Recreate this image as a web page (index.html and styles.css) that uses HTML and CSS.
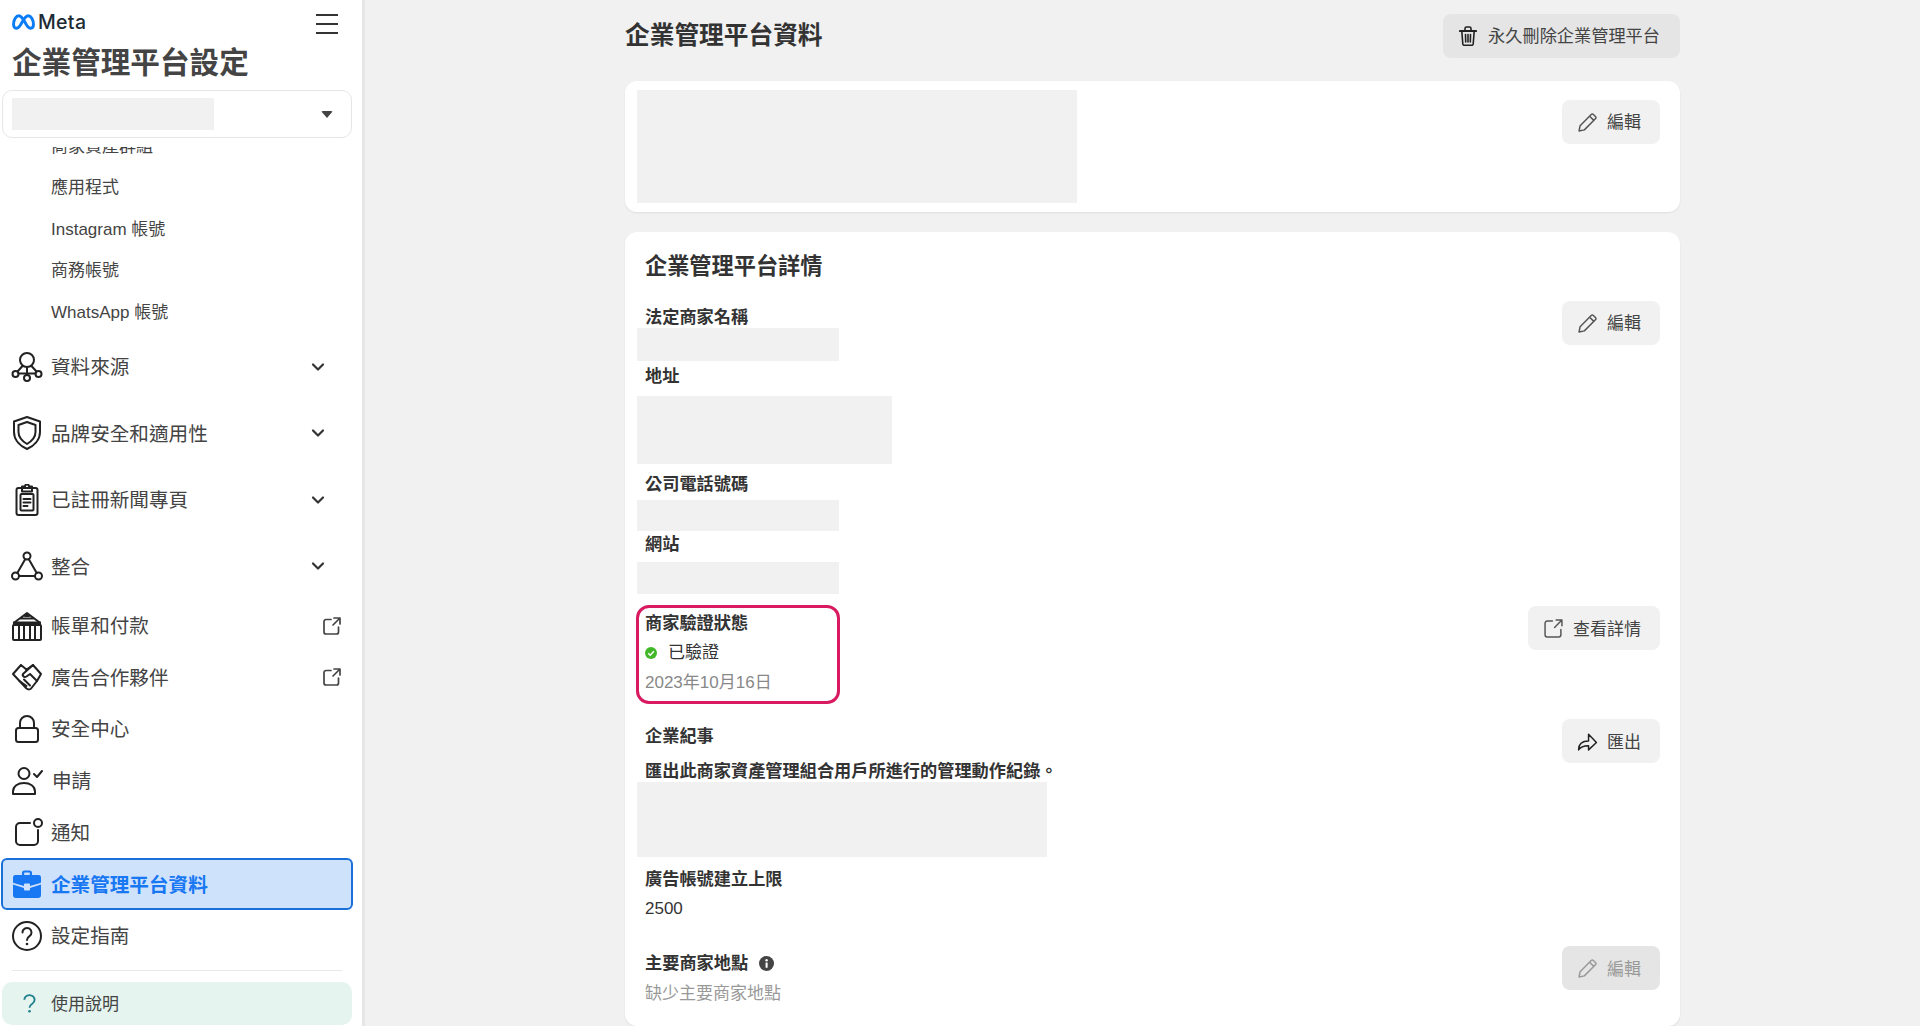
FILE: index.html
```html
<!DOCTYPE html>
<html lang="zh-Hant">
<head>
<meta charset="utf-8">
<title>企業管理平台設定</title>
<link rel="stylesheet" href="styles.css">
</head>
<body>
<div class="app">
  <aside class="sidebar">
    <header class="side-head">
      <div class="brand-row">
        <div class="brand">
          <svg class="meta-mark" viewBox="0 0 22 15"><path d="M1.500 10C1.500 5 4 1.500 6.500 1.500C9.500 1.500 12 7 14 10.500C15.500 13 17 13.500 18 13.500C19.500 13.500 20.500 12 20.500 10C20.500 5 18 1.500 15.500 1.500C12.500 1.500 10 7 8 10.500C6.500 13 5 13.500 4 13.500C2.500 13.500 1.500 12 1.500 10Z"/></svg>
          <span class="brand-name">Meta</span>
        </div>
        <div class="burger"><i></i><i></i><i></i></div>
      </div>
      <h1 class="side-title">企業管理平台設定</h1>
      <div class="picker">
        <div class="picker-mask"></div>
        <span class="caret"></span>
      </div>
    </header>

    <nav class="nav">
      <div class="nav-inner">
        <a class="sub">商家資產群組</a>
        <a class="sub">應用程式</a>
        <a class="sub">Instagram 帳號</a>
        <a class="sub">商務帳號</a>
        <a class="sub">WhatsApp 帳號</a>

        <a class="row group">
          <svg class="ico" viewBox="0 0 32 32"><circle cx="16" cy="9" r="7"/><circle cx="4.500" cy="23" r="3"/><circle cx="16" cy="27" r="3"/><circle cx="27.500" cy="23" r="3"/><path d="M7.500 22.500h17M16 16v8M11.500 15l-5 5.500M20.500 15l5 5.500"/></svg>
          <span class="row-text">資料來源</span>
          <svg class="chev" viewBox="0 0 14 14"><path d="M2 4.500l5 5 5-5"/></svg>
        </a>
        <a class="row group">
          <svg class="ico ico-tall" viewBox="0 0 32 36"><path d="M16 2L29 6.500V17C29 25 23 31 16 34C9 31 3 25 3 17V6.500Z"/><path d="M16 7l8.500 3V17C24.500 22 21 26 16 29C11 26 7.500 22 7.500 17V10Z"/></svg>
          <span class="row-text">品牌安全和適用性</span>
          <svg class="chev" viewBox="0 0 14 14"><path d="M2 4.500l5 5 5-5"/></svg>
        </a>
        <a class="row group">
          <svg class="ico" viewBox="0 0 32 32"><rect x="5.500" y="4" width="21" height="27" rx="2"/><path d="M11 4V2.500h3a2 2 0 0 1 4 0h3V4M11 4v3.500h10V4"/><rect x="9.500" y="10" width="13" height="16.500" rx="1"/><path d="M12.500 15h7M12.500 18.500h7M12.500 22h4"/></svg>
          <span class="row-text">已註冊新聞專頁</span>
          <svg class="chev" viewBox="0 0 14 14"><path d="M2 4.500l5 5 5-5"/></svg>
        </a>
        <a class="row group">
          <svg class="ico" viewBox="0 0 32 32"><circle cx="16" cy="6" r="3.500"/><circle cx="4.500" cy="26" r="3.500"/><circle cx="27.500" cy="26" r="3.500"/><path d="M14.300 9L6.300 23M17.700 9l8 14M8 26h16"/></svg>
          <span class="row-text">整合</span>
          <svg class="chev" viewBox="0 0 14 14"><path d="M2 4.500l5 5 5-5"/></svg>
        </a>

        <a class="row">
          <svg class="ico" viewBox="0 0 32 32"><path d="M4 12L16 3l12 9M10 8.500h12M14 6h4"/><rect class="dot" x="2" y="11.500" width="28" height="4"/><rect x="2" y="15" width="28" height="15" rx="1"/><path d="M8 16v13M13 16v13M19 16v13M24 16v13"/></svg>
          <span class="row-text">帳單和付款</span>
          <svg class="ext" viewBox="0 0 18 18"><path d="M8 2.500H3A2 2 0 0 0 1 4.500V15a2 2 0 0 0 2 2h10.500a2 2 0 0 0 2-2V10M10 8l6.500-6.500M11 1h6v6"/></svg>
        </a>
        <a class="row">
          <svg class="ico" viewBox="0 0 32 32"><path d="M10 4L2 13l6.500 7 7 7.500c2 1.500 4 1 5-.5L26 20l4-7-8-9-7 5M10 4l6 5"/><path d="M22 4L12.500 12.500c-2 2 .5 4.500 3 3L19 13l7 7M8.500 20l7 5M13 18.500l6 6"/></svg>
          <span class="row-text">廣告合作夥伴</span>
          <svg class="ext" viewBox="0 0 18 18"><path d="M8 2.500H3A2 2 0 0 0 1 4.500V15a2 2 0 0 0 2 2h10.500a2 2 0 0 0 2-2V10M10 8l6.500-6.500M11 1h6v6"/></svg>
        </a>
        <a class="row">
          <svg class="ico" viewBox="0 0 32 32"><rect x="5" y="15" width="22" height="14" rx="2.500"/><path d="M9 15V10a7 7 0 0 1 14 0v5"/></svg>
          <span class="row-text">安全中心</span>
        </a>
        <a class="row">
          <svg class="ico" viewBox="0 0 32 32"><circle cx="13" cy="8.500" r="5.500"/><path d="M2 29v-2.500C2 21 7 18 13 18s11 3 11 8.500V29Z"/><path d="M23 9l3 3 5-6"/></svg>
          <span class="row-text row-text-nudge">申請</span>
        </a>
        <a class="row">
          <svg class="ico" viewBox="0 0 32 32"><path d="M19 7H9a4 4 0 0 0-4 4v14a4 4 0 0 0 4 4h14a4 4 0 0 0 4-4V14"/><circle cx="27" cy="7" r="4"/></svg>
          <span class="row-text">通知</span>
        </a>
        <a class="row active">
          <svg class="ico solid" viewBox="0 0 32 32"><path d="M11 7V5a2.500 2.500 0 0 1 2.500-2.500h5A2.500 2.500 0 0 1 21 5v2h-2.200V5a.500.500 0 0 0-.500-.500h-4.600a.500.500 0 0 0-.500.500v2z"/><path d="M4 7h24a2.500 2.500 0 0 1 2 2.500V14a1 1 0 0 1-.6.900L19 18v-1.500a1 1 0 0 0-1-1h-4a1 1 0 0 0-1 1V18L2.600 14.900A1 1 0 0 1 2 14V9.500A2.500 2.500 0 0 1 4 7z"/><path d="M2 16.500L13 20v1.500a1 1 0 0 0 1 1h4a1 1 0 0 0 1-1V20l11-3.500V27a3 3 0 0 1-3 3H5a3 3 0 0 1-3-3z"/><rect x="14.700" y="17" width="2.600" height="4" rx=".5"/></svg>
          <span class="row-text">企業管理平台資料</span>
        </a>
        <a class="row">
          <svg class="ico" viewBox="0 0 32 32"><circle cx="16" cy="16" r="14"/><path d="M11.500 12.500a4.500 4.500 0 1 1 7 3.700c-1.500 1-2.500 1.800-2.500 3.800"/><circle class="dot" cx="16" cy="24" r="1.300"/></svg>
          <span class="row-text">設定指南</span>
        </a>
      </div>
    </nav>

    <footer class="side-foot">
      <div class="rule"></div>
      <a class="help">
        <svg class="help-ico" viewBox="0 0 14 20"><path d="M1.500 6a5.500 5 0 1 1 8.500 4.200C8 11.500 7 12.500 7 14.500"/><circle cx="7" cy="18.300" r="1.400"/></svg>
        <span class="help-text">使用說明</span>
      </a>
    </footer>
  </aside>

  <main class="main">
    <div class="page-head">
      <h2 class="page-title">企業管理平台資料</h2>
      <button class="btn btn-strong btn-del">
        <svg class="btn-ico trash" viewBox="0 0 18 20"><path class="lid" d="M1 5h16"/><path d="M6 4.500V2.500A1.500 1.500 0 0 1 7.500 1h3A1.500 1.500 0 0 1 12 2.500v2M2.800 5l1 13a1.500 1.500 0 0 0 1.500 1.300h7.400a1.500 1.500 0 0 0 1.500-1.300l1-13M6.500 8.500l.2 7.500M9 8.500V16M11.500 8.500l-.2 7.500"/></svg>
        <span class="btn-text">永久刪除企業管理平台</span>
      </button>
    </div>

    <section class="card card-top">
      <div class="mask mask-logo"></div>
      <button class="btn btn-edit-top">
        <svg class="btn-ico thin" viewBox="0 0 18 18"><path d="M1 17l1-5L12.500 1.500a1.500 1.500 0 0 1 2.100 0l1.900 1.900a1.500 1.500 0 0 1 0 2.100L6 16zM11 3l4 4"/></svg>
        <span class="btn-text">編輯</span>
      </button>
    </section>

    <section class="card card-detail">
      <h3 class="card-title">企業管理平台詳情</h3>

      <div class="split">
        <div class="col">
          <div class="label l-legal">法定商家名稱</div>
          <div class="mask mask-name"></div>
          <div class="label l-addr">地址</div>
          <div class="mask mask-addr"></div>
          <div class="label l-phone">公司電話號碼</div>
          <div class="mask mask-phone"></div>
          <div class="label l-site">網站</div>
          <div class="mask mask-site"></div>
        </div>
        <button class="btn btn-a">
          <svg class="btn-ico thin" viewBox="0 0 18 18"><path d="M1 17l1-5L12.500 1.500a1.500 1.500 0 0 1 2.100 0l1.900 1.900a1.500 1.500 0 0 1 0 2.100L6 16zM11 3l4 4"/></svg>
          <span class="btn-text">編輯</span>
        </button>
      </div>

      <div class="split">
        <div class="col">
          <div class="verify">
            <div class="label">商家驗證狀態</div>
            <div class="status">
              <svg class="check" viewBox="0 0 12 12"><circle cx="6" cy="6" r="6"/><path d="M3.200 6.200l2 2 3.700-4"/></svg>
              <span>已驗證</span>
            </div>
            <div class="muted date">2023年10月16日</div>
          </div>
        </div>
        <button class="btn btn-b">
          <svg class="btn-ico thin" viewBox="0 0 18 18"><path d="M8 2H3A2 2 0 0 0 1 4v11a2 2 0 0 0 2 2h11a2 2 0 0 0 2-2v-5M10 8l6.500-6.500M11.500 1H17v5.500"/></svg>
          <span class="btn-text btn-text-low">查看詳情</span>
        </button>
      </div>

      <div class="split">
        <div class="col">
          <div class="label l-log">企業紀事</div>
          <div class="label l-logdesc">匯出此商家資產管理組合用戶所進行的管理動作紀錄。</div>
          <div class="mask mask-log"></div>
          <div class="label l-limit">廣告帳號建立上限</div>
          <div class="value">2500</div>
        </div>
        <button class="btn btn-c">
          <svg class="btn-ico dark" viewBox="0 0 20 20"><path d="M1.500 18C1.500 12 5 9.500 11 9.500V3l7.500 8L11 18v-4C7 14 3.500 14.500 1.500 18Z"/></svg>
          <span class="btn-text btn-text-low">匯出</span>
        </button>
      </div>

      <div class="split split-end">
        <div class="col">
          <div class="label l-place">主要商家地點
            <svg class="info" viewBox="0 0 16 16"><circle cx="8" cy="8" r="8"/><rect class="info-i" x="7" y="7" width="2.200" height="5.500"/><circle class="info-i" cx="8.100" cy="4.600" r="1.300"/></svg>
          </div>
          <div class="muted value-place">缺少主要商家地點</div>
        </div>
        <button class="btn btn-d btn-strong is-off">
          <svg class="btn-ico thin" viewBox="0 0 18 18"><path d="M1 17l1-5L12.500 1.500a1.500 1.500 0 0 1 2.100 0l1.900 1.900a1.500 1.500 0 0 1 0 2.100L6 16zM11 3l4 4"/></svg>
          <span class="btn-text btn-text-low">編輯</span>
        </button>
      </div>
    </section>
  </main>
</div>
</body>
</html>
```

FILE: styles.css
```css
* { box-sizing: border-box; }
html, body { margin: 0; height: 100%; overflow: hidden; }
body {
  font-family: "Liberation Sans", "Noto Sans CJK TC", sans-serif;
  font-size: 17px;
  color: #444;
  background: #f1f1f1;
}
.app { display: flex; height: 1026px; overflow: hidden; }

/* sidebar */
.sidebar {
  width: 365px;
  flex: none;
  display: flex;
  flex-direction: column;
  background: #fff;
  border-right: 3px solid #e6e6e6;
}
.side-head { height: 147px; flex: none; padding: 0 2px; }
.brand-row {
  display: flex;
  justify-content: space-between;
  align-items: flex-start;
  padding: 13px 22px 0 10px;
  height: 44px;
}
.brand { display: flex; align-items: center; height: 18px; }
.meta-mark { width: 23px; height: 16px; fill: none; stroke: #0a7cf5; stroke-width: 2.800; }
.brand-name { font-family: Inter, sans-serif; font-size: 19.500px; font-weight: 500; letter-spacing: .3px; color: #1c2b33; margin-left: 3px; }
.burger { display: flex; flex-direction: column; gap: 7px; padding-top: 1px; }
.burger i { display: block; width: 22px; height: 2px; background: #333; }
.side-title { margin: 0; padding-left: 10px; font-size: 29.600px; line-height: 38px; font-weight: 700; color: #444; height: 46px; }
.picker {
  height: 48px;
  width: 350px;
  border: 1px solid #e6e6e6;
  border-radius: 10px;
  display: flex;
  align-items: center;
  justify-content: space-between;
  padding: 0 18px 0 9px;
}
.picker-mask { width: 202px; height: 32px; background: #f1f1f1; }
.caret { width: 0; height: 0; border-left: 6px solid transparent; border-right: 6px solid transparent; border-top: 7px solid #444; border-radius: 2px; }

.nav { flex: 1; overflow: hidden; min-height: 0; }
.nav-inner { margin-top: -21.300px; }
.sub { display: block; height: 41.600px; line-height: 41.600px; padding-left: 51px; font-size: 17px; color: #444; }
.row {
  display: flex;
  align-items: center;
  height: 51.700px;
  padding: 0 21px 0 11px;
  font-size: 19.600px;
  color: #444;
}
.row.group { height: 66.500px; padding-right: 37px; }
.row-text { margin-left: 8px; flex: 1; padding-bottom: 2px; }
.row-text-nudge { margin-left: 9px; }
.ico { width: 32px; height: 32px; flex: none; fill: none; stroke: #222; stroke-width: 2; stroke-linejoin: round; stroke-linecap: round; }
.ico .dot { fill: #222; stroke: none; }
.ico-tall { height: 36px; }
.chev { width: 14px; height: 14px; fill: none; stroke: #333; stroke-width: 2.200; stroke-linecap: round; stroke-linejoin: round; }
.ext { width: 18px; height: 18px; fill: none; stroke: #444; stroke-width: 1.700; stroke-linecap: round; stroke-linejoin: round; }
.row.active {
  width: 352px;
  margin-left: 1px;
  padding-left: 8px;
  background: #cfe2fb;
  border: 2px solid #1b6fd8;
  border-radius: 6px;
  font-weight: 700;
  color: #1877f2;
}
.row.active .row-text { padding-bottom: 0; }
.ico.solid { fill: #1877f2; stroke: none; }
.ico.solid rect { fill: #cfe2fb; }

.side-foot { flex: none; padding: 0 0 1px 2px; }
.rule { height: 1px; width: 330px; margin: 0 0 11px 10px; background: #e8e8e8; }
.help {
  display: flex;
  align-items: center;
  width: 350px;
  height: 43px;
  background: #e5f4ef;
  border-radius: 10px;
  font-size: 17px;
  color: #444;
  padding-left: 21px;
}
.help-text { padding-bottom: 2px; }
.help-ico { width: 13px; height: 19px; fill: none; stroke: #1f7f8c; stroke-width: 2; margin-right: 15px; }
.help-ico circle { fill: #1f7f8c; stroke: none; }

/* main */
.main { flex: 1; padding-left: 260px; min-width: 0; }
.page-head {
  width: 1055px;
  height: 81px;
  padding-top: 14px;
  display: flex;
  justify-content: space-between;
  align-items: flex-start;
}
.page-title { margin: 0; font-size: 24.700px; line-height: 44px; font-weight: 700; color: #333; }

.btn {
  display: flex;
  align-items: center;
  flex: none;
  height: 44px;
  padding: 0 19px 0 16px;
  gap: 11px;
  border: 0;
  border-radius: 8px;
  background: #f1f1f1;
  font: inherit;
  color: #444;
}
.btn-text { padding-bottom: 3px; }
.btn-text-low { padding-bottom: 2px; }
.btn-strong { background: #e5e5e5; }
.btn-del { padding-right: 20px; font-size: 17.200px; }
.btn-ico { width: 19px; height: 19px; flex: none; margin-right: -1px; fill: none; stroke: #222; stroke-width: 1.400; stroke-linejoin: round; stroke-linecap: round; }
.btn-ico.trash { width: 18px; height: 20px; margin-right: 0; stroke-width: 1.600; }
.btn-ico .lid { stroke-width: 2.200; }
.btn-ico.thin { stroke: #555; }
.btn-ico.dark { width: 21px; height: 21px; stroke: #222; margin-right: -2px; margin-left: -1px; }
.is-off { color: #999; }
.is-off .btn-ico { stroke: #999; }

.card {
  width: 1055px;
  background: #fff;
  border-radius: 12px;
  box-shadow: 0 1px 2px rgba(0,0,0,.08);
}
.card-top {
  height: 131px;
  display: flex;
  justify-content: space-between;
  align-items: flex-start;
  padding: 9px 20px 9px 12px;
  margin-bottom: 20px;
}
.btn-edit-top { margin-top: 10px; }
.mask { background: #f1f1f1; }
.mask-logo { width: 440px; height: 113px; }

.card-detail { height: 794px; padding: 20px 20px 0 12px; }
.card-title { margin: 0; padding-left: 8px; font-size: 22.200px; line-height: 29px; font-weight: 700; color: #333; }
.split { display: flex; justify-content: space-between; align-items: flex-start; }
.col { min-width: 0; }
.label { padding-left: 8px; height: 22px; line-height: 23px; font-size: 17.200px; font-weight: 700; color: #333; white-space: nowrap; }
.l-legal { margin-top: 25px; }
.l-addr { margin-top: 5px; margin-bottom: 8px; line-height: 21px; }
.l-phone { margin-top: 9px; margin-bottom: 5px; }
.l-site { margin-top: 2px; margin-bottom: 7px; }
.mask-name { width: 202px; height: 33px; }
.mask-addr { width: 255px; height: 68px; }
.mask-phone { width: 202px; height: 31px; }
.mask-site { width: 202px; height: 32px; }
.btn-a { margin-top: 20px; }

.verify {
  width: 204px;
  height: 99px;
  margin: 11px 0 0 -1px;
  padding: 4px 0 0 6px;
  border: 3px solid #d81b60;
  border-radius: 13px;
}
.verify .label { padding-left: 0; }
.status { display: flex; align-items: center; height: 22px; margin-top: 8px; line-height: 22px; color: #333; }
.check { width: 12px; height: 12px; margin-right: 11px; fill: #42b72a; stroke: none; }
.check path { fill: none; stroke: #fff; stroke-width: 1.500; }
.muted { color: #888; height: 22px; line-height: 24px; white-space: nowrap; }
.date { margin-top: 7px; }
.btn-b { margin-top: 12px; }

.l-log { margin-top: 21px; }
.l-logdesc { margin-top: 13px; }
.mask-log { width: 410px; height: 75px; }
.l-limit { margin-top: 11px; }
.value { padding-left: 8px; margin-top: 7px; height: 22px; line-height: 24px; color: #333; }
.btn-c { margin-top: 15px; }

.l-place { margin-top: 33px; display: flex; align-items: center; }
.info { width: 15px; height: 15px; margin-left: 11px; fill: #444; }
.info .info-i { fill: #fff; }
.value-place { padding-left: 8px; margin-top: 7px; color: #999; line-height: 26px; }
.btn-d { margin-top: 27px; }
```
